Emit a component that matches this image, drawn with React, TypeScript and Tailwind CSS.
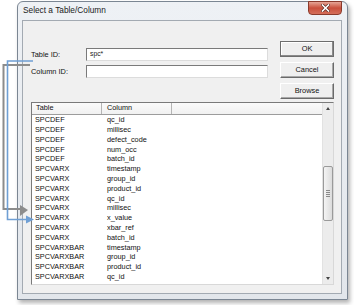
const rows: [string, string][] = [
  ['SPCDEF', 'qc_id'],
  ['SPCDEF', 'millisec'],
  ['SPCDEF', 'defect_code'],
  ['SPCDEF', 'num_occ'],
  ['SPCDEF', 'batch_id'],
  ['SPCVARX', 'timestamp'],
  ['SPCVARX', 'group_id'],
  ['SPCVARX', 'product_id'],
  ['SPCVARX', 'qc_id'],
  ['SPCVARX', 'millisec'],
  ['SPCVARX', 'x_value'],
  ['SPCVARX', 'xbar_ref'],
  ['SPCVARX', 'batch_id'],
  ['SPCVARXBAR', 'timestamp'],
  ['SPCVARXBAR', 'group_id'],
  ['SPCVARXBAR', 'product_id'],
  ['SPCVARXBAR', 'qc_id'],
];

function Button({ label, primary }: { label: string; primary?: boolean }) {
  return (
    <div
      className={
        'h-[16px] w-[54px] flex items-center justify-center text-[7.4px] text-[#111] bg-[#efefef] border ' +
        (primary
          ? 'border-[#6d6d6d] shadow-[inset_-1px_-1px_0_#8a8a8a,inset_1px_1px_0_#ffffff]'
          : 'border-t-[#ffffff] border-l-[#ffffff] border-r-[#6a6a6a] border-b-[#6a6a6a] shadow-[inset_-1px_-1px_0_#a8a8a8]')
      }
    >
      {label}
    </div>
  );
}

function Field({ label, value }: { label: string; value?: string }) {
  return (
    <div className="flex items-center h-[13px]">
      <div className="w-[55px] text-[7.4px] text-[#111]">{label}</div>
      <div className="w-[182px] h-[13px] bg-white border border-t-[#7a7a7a] border-l-[#7a7a7a] border-r-[#dcdcdc] border-b-[#dcdcdc] flex items-center pl-[3px] text-[6.8px] text-[#222]">
        {value}
      </div>
    </div>
  );
}

export default function App() {
  return (
    <div className="relative w-[354px] h-[305px] bg-white overflow-hidden font-['Liberation_Sans',Arial,sans-serif]">
      {/* window */}
      <div className="ml-[17px] mt-[1px] w-[331px] h-[299px] rounded-t-[6px] border border-[#7b8693] bg-gradient-to-b from-[#eef1f5] to-[#e2e6eb] shadow-[2px_3px_4px_rgba(0,0,0,0.3)] flex flex-col pl-[4px] pr-[5px] pb-[5px]">
        {/* title bar */}
        <div className="h-[18px] flex justify-between">
          <div className="pl-[1px] pt-[4px] text-[8.3px] text-[#1a1a1a] leading-none">Select a Table/Column</div>
          <div className="w-[34px] h-[14px] -mt-[1px] rounded-b-[4px] border border-[#8a3a2c] bg-gradient-to-b from-[#e5a596] via-[#c9503c] to-[#d46e5a] flex items-center justify-center">
            <svg width="9" height="8" viewBox="0 0 9 8">
              <path d="M1.5 1 L7.5 7 M7.5 1 L1.5 7" stroke="#5a2a22" strokeWidth="3" strokeLinecap="square" />
              <path d="M1.5 1 L7.5 7 M7.5 1 L1.5 7" stroke="#ffffff" strokeWidth="1.6" strokeLinecap="square" />
            </svg>
          </div>
        </div>

        {/* client area */}
        <div className="flex-1 border border-[#a3aab2] bg-[#f0f0f0] flex flex-col pl-[8px] pr-[7px] pt-[20px]">
          <div className="flex">
            <div className="flex flex-col gap-[4px] pt-[7px]">
              <Field label="Table ID:" value="spc*" />
              <Field label="Column ID:" />
            </div>
            <div className="ml-[12px] flex flex-col gap-[5px]">
              <Button label="OK" primary />
              <Button label="Cancel" />
              <Button label="Browse" />
            </div>
          </div>

          {/* list */}
          <div className="mt-[3px] h-[183px] bg-white border border-t-[#7a7a7a] border-l-[#7a7a7a] border-r-[#d8d8d8] border-b-[#d8d8d8] flex">
            <div className="flex-1 flex flex-col">
              <div className="h-[12px] flex border-b border-[#9c9c9c] bg-gradient-to-b from-[#fbfbfb] to-[#f1f1f1] text-[7.3px] text-[#111]">
                <div className="w-[70px] pl-[4px] border-r border-[#b5b5b5] flex items-center">Table</div>
                <div className="w-[70px] pl-[5px] border-r border-[#b5b5b5] flex items-center">Column</div>
                <div className="flex-1" />
              </div>
              {rows.map(([t, c], i) => (
                <div key={i} className="h-[9.8px] flex items-center text-[7.3px] text-[#111] leading-none">
                  <div className="w-[70px] pl-[3px]">{t}</div>
                  <div className="w-[70px] pl-[5px]">{c}</div>
                </div>
              ))}
            </div>
            {/* scrollbar */}
            <div className="w-[11px] bg-[#ececec] border-l border-[#e2e2e2] flex flex-col items-center">
              <div className="h-[11px] flex items-center justify-center">
                <div className="w-0 h-0 border-l-[2.5px] border-r-[2.5px] border-b-[3px] border-l-transparent border-r-transparent border-b-[#444]" />
              </div>
              <div className="h-[52px]" />
              <div className="w-[10px] h-[55px] rounded-[2px] border border-[#9a9a9a] bg-gradient-to-r from-[#f4f4f4] to-[#dcdcdc] flex flex-col items-center justify-center gap-[1px]">
                <div className="w-[4px] h-px bg-[#8a8a8a]" />
                <div className="w-[4px] h-px bg-[#8a8a8a]" />
                <div className="w-[4px] h-px bg-[#8a8a8a]" />
                <div className="w-[4px] h-px bg-[#8a8a8a]" />
              </div>
              <div className="flex-1" />
              <div className="h-[11px] flex items-center justify-center">
                <div className="w-0 h-0 border-l-[2.5px] border-r-[2.5px] border-t-[3px] border-l-transparent border-r-transparent border-t-[#444]" />
              </div>
            </div>
          </div>
        </div>
      </div>

      {/* annotation arrows */}
      <svg className="absolute inset-0 pointer-events-none" width="354" height="305" viewBox="0 0 354 305">
        <path d="M30 65 H3.5 V209 H22" fill="none" stroke="#8c8c8c" strokeWidth="2" />
        <polygon points="20,205 28,210 20,216" fill="#8c8c8c" />
        <path d="M33 61 H7.5 V219.5 H27" fill="none" stroke="#6f9fd4" strokeWidth="1.6" />
        <polygon points="26,215.5 34,219.5 26,223.5" fill="#6f9fd4" />
      </svg>
    </div>
  );
}
